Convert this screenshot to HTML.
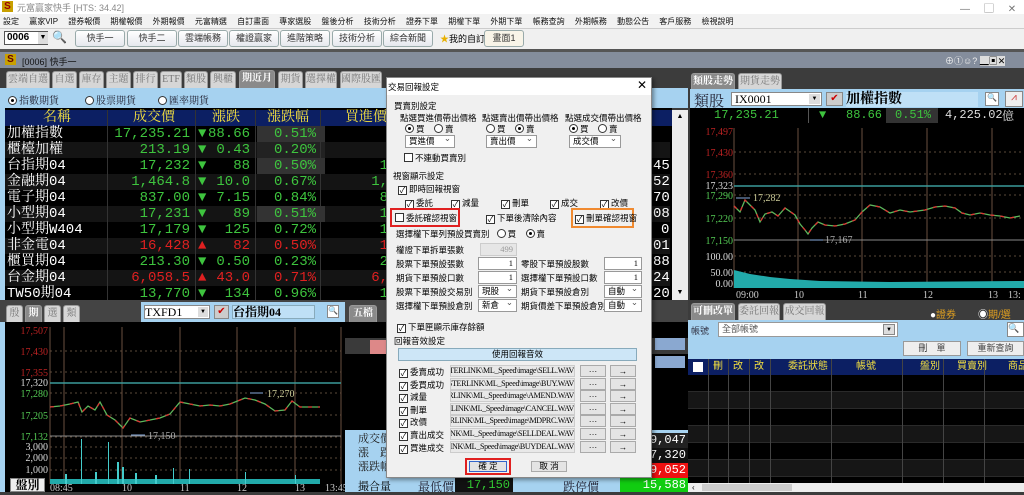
<!DOCTYPE html>
<html><head><meta charset="utf-8"><style>
*{box-sizing:border-box;margin:0;padding:0}
body{width:1024px;height:492px;overflow:hidden;background:#3c3c3c;font-family:"Liberation Sans","Noto Sans CJK TC",sans-serif;font-size:9px;position:relative;color:#000}
.a{position:absolute;white-space:nowrap}
.dlg .a,.dlg .sel,.dlg .inp,.dlg .btn{font-size:8.5px}
.tab{position:absolute;height:17px;background:#d6d6d6;border:1px solid #999;border-bottom:none;border-radius:3px 3px 0 0;color:#777;font-size:10px;line-height:16px;text-align:center;font-family:"Liberation Serif","Noto Serif CJK SC",serif}
.tab.on{background:#8a8a8a;color:#fff;font-weight:bold}
.tb{position:absolute;top:30px;height:17px;border:1px solid #9aa;border-radius:3px;background:linear-gradient(#fff,#e6e8ee);font-size:9px;line-height:15px;text-align:center;color:#333}
.row{position:absolute;left:5px;width:665px;height:16px;font-family:"Liberation Mono","Noto Serif CJK SC",monospace;font-size:14px;line-height:16px}
.row span{position:absolute}
.g{color:#3ec43e}.r{color:#e02020}.w{color:#fff}
.cb{display:inline-block;width:9px;height:9px;border:1px solid #333;background:#fff;vertical-align:-1px;margin-right:2px;font-size:8px;line-height:7px;text-align:center}
.rd{display:inline-block;width:9px;height:9px;border:1px solid #333;border-radius:50%;background:#fff;vertical-align:-1px;margin-right:2px;position:relative}
.rd.on::after{content:"";position:absolute;left:2px;top:2px;width:3px;height:3px;border-radius:50%;background:#000}
.sel{position:absolute;height:13px;border:1px solid #999;background:#fff;font-size:9px;line-height:11px;padding-left:3px}
.sel::after{content:"⌄";position:absolute;right:3px;top:-3px;color:#555}
.inp{position:absolute;height:13px;border:1px solid #999;background:#fff;font-size:9px;line-height:11px;text-align:right;padding-right:3px;font-family:"Liberation Serif",serif}
.btn{position:absolute;height:12px;border:1px solid #aaa;background:#e4e4e4;font-size:9px;line-height:10px;text-align:center}
.path{position:absolute;left:450px;width:125px;height:12px;background:#e8e8e8;border:1px solid #ccc;font-family:"Liberation Serif",serif;font-size:8px;letter-spacing:-0.3px;line-height:10px;overflow:hidden;direction:rtl;text-align:left}
</style></head><body>
<div class="a" style="left:0;top:0;width:1024px;height:14px;background:#fff"></div>
<div class="a" style="left:2px;top:1px;width:11px;height:11px;background:#c8a000;color:#900;font-weight:bold;font-size:10px;line-height:11px;text-align:center">S</div>
<div class="a" style="left:17px;top:1px;color:#888;font-size:9px">元富贏家快手 [HTS: 34.42]</div>
<div class="a" style="left:960px;top:0;color:#777;font-size:10px">—&nbsp;&nbsp;&nbsp;&nbsp;&nbsp;▢&nbsp;&nbsp;&nbsp;&nbsp;&nbsp;✕</div>
<div class="a" style="left:0;top:14px;width:1024px;height:15px;background:#f2f2f2;border-bottom:1px solid #ccc"></div>
<div class="a" style="left:3px;top:16px;font-size:8px;color:#111;word-spacing:8px">設定 贏家VIP 證券報價 期權報價 外期報價 元富精選 自訂畫面 專家選股 盤後分析 技術分析 證券下單 期權下單 外期下單 帳務查詢 外期帳務 動態公告 客戶服務 檢視說明</div>
<div class="a" style="left:0;top:29px;width:1024px;height:20px;background:#f0f0f0"></div>
<div class="a" style="left:4px;top:31px;width:44px;height:14px;border:1px solid #555;background:#fff;font-weight:bold;font-size:10px;line-height:12px;padding-left:2px">0006</div>
<div class="a" style="left:38px;top:32px;width:10px;height:12px;background:#ddd;font-size:7px;text-align:center;line-height:12px">▼</div>
<div class="a" style="left:52px;top:30px;font-size:12px">🔍</div>
<div class="tb" style="left:75px;width:50px">快手一</div>
<div class="tb" style="left:127px;width:50px">快手二</div>
<div class="tb" style="left:178px;width:50px">雲端帳務</div>
<div class="tb" style="left:229px;width:50px">權證贏家</div>
<div class="tb" style="left:280px;width:50px">進階策略</div>
<div class="tb" style="left:332px;width:50px">技術分析</div>
<div class="tb" style="left:383px;width:50px">綜合新聞</div>
<div class="a" style="left:440px;top:32px;font-size:9px"><span style="color:#e8b000">★</span>我的自訂</div>
<div class="tb" style="left:484px;width:40px;background:#f8f4e8">畫面1</div>
<div class="a" style="left:0;top:49px;width:1024px;height:3px;background:#555"></div>
<div class="a" style="left:0;top:52px;width:1024px;height:16px;background:#848d9c"></div>
<div class="a" style="left:5px;top:54px;width:11px;height:11px;background:#c8a000;color:#600;font-weight:bold;font-size:10px;line-height:11px;text-align:center">S</div>
<div class="a" style="left:22px;top:55px;color:#111;font-size:9px">[0006] 快手一</div>
<div class="a" style="left:945px;top:54px;color:#eee;font-size:9px">⊕①☺? <span style="background:#ddd;color:#000">▁▣✕</span></div>
<div class="tab" style="left:6px;top:71px;width:44px">雲端自選</div>
<div class="tab" style="left:52px;top:71px;width:25px">自選</div>
<div class="tab" style="left:79px;top:71px;width:25px">庫存</div>
<div class="tab" style="left:106px;top:71px;width:25px">主題</div>
<div class="tab" style="left:133px;top:71px;width:25px">排行</div>
<div class="tab" style="left:160px;top:71px;width:22px">ETF</div>
<div class="tab" style="left:184px;top:71px;width:24px">類股</div>
<div class="tab" style="left:210px;top:71px;width:26px">興櫃</div>
<div class="tab on" style="left:239px;top:70px;width:36px;height:18px">期近月</div>
<div class="tab" style="left:278px;top:71px;width:25px">期貨</div>
<div class="tab" style="left:305px;top:71px;width:32px">選擇權</div>
<div class="tab" style="left:340px;top:71px;width:42px">國際股匯</div>
<div class="a" style="left:0;top:88px;width:688px;height:20px;background:#a6d2f0"></div>
<div class="a" style="left:8px;top:92px;font-size:10px;color:#223;font-family:'Liberation Serif','Noto Serif CJK SC',serif"><span class="rd on"></span>指數期貨</div>
<div class="a" style="left:85px;top:92px;font-size:10px;color:#223;font-family:'Liberation Serif','Noto Serif CJK SC',serif"><span class="rd"></span>股票期貨</div>
<div class="a" style="left:158px;top:92px;font-size:10px;color:#223;font-family:'Liberation Serif','Noto Serif CJK SC',serif"><span class="rd"></span>匯率期貨</div>
<div class="a" style="left:0;top:108px;width:5px;height:195px;background:#a6d2f0"></div>
<div class="a" style="left:5px;top:108px;width:667px;height:192px;background:#000"></div>
<div class="a" style="left:5px;top:110px;width:667px;height:16px;background:#0c1f63;color:#f4e040;font-size:14px;line-height:16px;font-family:'Liberation Serif','Noto Serif CJK SC',serif">
<span class="a" style="left:38px">名稱</span><span class="a" style="left:128px">成交價</span><span class="a" style="left:207px">漲跌</span><span class="a" style="left:262px">漲跌幅</span><span class="a" style="left:340px">買進價</span></div>
<div class="row" style="top:126px"><span class="w" style="left:2px">加權指數</span><span class="g" style="right:480px">17,235.21</span><span class="g" style="left:193px">▼</span><span class="g" style="right:420px">88.66</span><span style="left:252px;width:68px;height:16px;background:#333"></span><span class="g" style="right:354px">0.51%</span></div>
<div class="row" style="top:142px;background:#141414"><span class="w" style="left:2px">櫃檯加權</span><span class="g" style="right:480px">213.19</span><span class="g" style="left:193px">▼</span><span class="g" style="right:420px">0.43</span><span style="left:252px;width:68px;height:16px;background:#222"></span><span class="g" style="right:354px">0.20%</span></div>
<div class="row" style="top:158px"><span class="w" style="left:2px">台指期04</span><span class="g" style="right:480px">17,232</span><span class="g" style="left:193px">▼</span><span class="g" style="right:420px">88</span><span style="left:252px;width:68px;height:16px;background:#333"></span><span class="g" style="right:354px">0.50%</span><span class="g" style="right:240px">17,232</span><span class="w" style="left:648px">45</span></div>
<div class="row" style="top:174px;background:#141414"><span class="w" style="left:2px">金融期04</span><span class="g" style="right:480px">1,464.8</span><span class="g" style="left:193px">▼</span><span class="g" style="right:420px">10.0</span><span class="g" style="right:354px">0.67%</span><span class="g" style="right:240px">1,464.8</span><span class="w" style="left:648px">52</span></div>
<div class="row" style="top:190px"><span class="w" style="left:2px">電子期04</span><span class="g" style="right:480px">837.00</span><span class="g" style="left:193px">▼</span><span class="g" style="right:420px">7.15</span><span class="g" style="right:354px">0.84%</span><span class="g" style="right:240px">837.00</span><span class="w" style="left:648px">70</span></div>
<div class="row" style="top:206px;background:#141414"><span class="w" style="left:2px">小型期04</span><span class="g" style="right:480px">17,231</span><span class="g" style="left:193px">▼</span><span class="g" style="right:420px">89</span><span style="left:252px;width:68px;height:16px;background:#333"></span><span class="g" style="right:354px">0.51%</span><span class="g" style="right:240px">17,231</span><span class="w" style="left:648px">08</span></div>
<div class="row" style="top:222px"><span class="w" style="left:2px">小型期W404</span><span class="g" style="right:480px">17,179</span><span class="g" style="left:193px">▼</span><span class="g" style="right:420px">125</span><span class="g" style="right:354px">0.72%</span><span class="g" style="right:240px">17,179</span><span class="w" style="left:656px">0</span></div>
<div class="row" style="top:238px;background:#141414"><span class="w" style="left:2px">非金電04</span><span class="r" style="right:480px">16,428</span><span class="r" style="left:193px">▲</span><span class="r" style="right:420px">82</span><span class="r" style="right:354px">0.50%</span><span class="r" style="right:240px">16,428</span><span class="w" style="left:648px">01</span></div>
<div class="row" style="top:254px"><span class="w" style="left:2px">櫃買期04</span><span class="g" style="right:480px">213.30</span><span class="g" style="left:193px">▼</span><span class="g" style="right:420px">0.50</span><span class="g" style="right:354px">0.23%</span><span class="g" style="right:240px">213.30</span><span class="w" style="left:648px">88</span></div>
<div class="row" style="top:270px;background:#141414"><span class="w" style="left:2px">台金期04</span><span class="r" style="right:480px">6,058.5</span><span class="r" style="left:193px">▲</span><span class="r" style="right:420px">43.0</span><span class="r" style="right:354px">0.71%</span><span class="r" style="right:240px">6,060.0</span><span class="w" style="left:648px">24</span></div>
<div class="row" style="top:286px"><span class="w" style="left:2px">TW50期04</span><span class="g" style="right:480px">13,770</span><span class="g" style="left:193px">▼</span><span class="g" style="right:420px">134</span><span class="g" style="right:354px">0.96%</span><span class="g" style="right:240px">13,770</span><span class="w" style="left:648px">20</span></div>
<div class="a" style="left:107px;top:110px;width:1px;height:190px;background:#333"></div>
<div class="a" style="left:195px;top:110px;width:1px;height:190px;background:#333"></div>
<div class="a" style="left:255px;top:110px;width:1px;height:190px;background:#333"></div>
<div class="a" style="left:320px;top:110px;width:1px;height:190px;background:#333"></div>
<div class="a" style="left:672px;top:110px;width:16px;height:190px;background:#eee;font-size:7px;text-align:center;line-height:14px">▲</div>
<div class="a" style="left:672px;top:286px;width:16px;height:14px;background:#eee;font-size:7px;text-align:center;line-height:14px">▼</div>
<div class="a" style="left:0;top:300px;width:688px;height:22px;background:#444"></div>
<div class="tab" style="left:6px;top:305px;width:17px">殷</div>
<div class="tab on" style="left:25px;top:305px;width:17px">期</div>
<div class="tab" style="left:44px;top:305px;width:17px">選</div>
<div class="tab" style="left:63px;top:305px;width:17px">類</div>
<div class="a" style="left:141px;top:302px;width:204px;height:20px;background:#a6d2f0"></div>
<div class="a" style="left:144px;top:305px;width:66px;height:14px;background:#fff;border:1px solid #888;font-size:12px;line-height:12px;font-family:'Liberation Serif',serif">TXFD1<span style="position:absolute;right:1px;top:1px;width:10px;height:10px;background:#ddd;font-size:6px;line-height:10px;text-align:center">▼</span></div>
<div class="a" style="left:214px;top:305px;width:15px;height:14px;background:#ccc;border:1px solid #888;color:#c00;font-size:10px;line-height:12px;text-align:center">✔</div>
<div class="a" style="left:232px;top:305px;width:83px;height:14px;background:#bfe0f6;border:1px solid #8ab;font-size:12px;line-height:12px;font-weight:bold;font-family:'Liberation Serif','Noto Serif CJK SC',serif">台指期04</div>
<div class="a" style="left:327px;top:305px;width:12px;height:13px;background:#fff;border:1px solid #888;font-size:8px;text-align:center">🔍</div>
<div class="tab on" style="left:349px;top:305px;width:28px">五檔</div>
<div class="a" style="left:0;top:322px;width:5px;height:170px;background:#a6d2f0"></div>
<svg class="a" style="left:5px;top:322px" width="340" height="170">
<rect width="340" height="170" fill="#000"/>
<g stroke="#5a4a3a" stroke-dasharray="2,3">
<line x1="45" y1="29" x2="336" y2="29"/><line x1="45" y1="50" x2="336" y2="50"/><line x1="45" y1="71" x2="336" y2="71"/><line x1="45" y1="93" x2="336" y2="93"/><line x1="45" y1="115" x2="336" y2="115"/><line x1="45" y1="125" x2="336" y2="125"/><line x1="45" y1="136" x2="336" y2="136"/><line x1="45" y1="148" x2="336" y2="148"/></g>
<g stroke="#6a5040"><line x1="59" y1="5" x2="59" y2="162"/><line x1="117" y1="5" x2="117" y2="162"/><line x1="175" y1="5" x2="175" y2="162"/><line x1="232" y1="5" x2="232" y2="162"/><line x1="290" y1="5" x2="290" y2="162"/><line x1="336" y1="5" x2="336" y2="162"/><line x1="45" y1="5" x2="45" y2="162"/></g>
<line x1="45" y1="61" x2="336" y2="61" stroke="#3a9a9a" stroke-width="1.5"/>
<line x1="45" y1="114" x2="336" y2="114" stroke="#888"/>
<polyline fill="none" stroke="#5cb85c" stroke-width="1.3" points="45,85 55,84 65,82 73,80 77,90 83,84 90,88 95,80 102,93 110,98 118,106 125,96 135,100 145,98 155,96 165,92 175,80 185,82 195,84 205,83 215,84 225,82 240,76 250,78 260,82 270,89 280,88 287,79 295,85 315,85"/>
<polyline fill="none" stroke="#d33" stroke-width="1.3" stroke-dasharray="4,6" points="45,85 55,84 65,82 73,80 77,90 83,84 90,88 95,80 102,93 110,98 118,106 125,96 135,100 145,98 155,96 165,92 175,80 185,82 195,84 205,83 215,84 225,82 240,76 250,78 260,82 270,89 280,88 287,79 295,85 315,85"/>
<g stroke="#8ad" fill="none"><line x1="126" y1="113" x2="140" y2="113"/><line x1="245" y1="71" x2="258" y2="71"/></g>
<text x="143" y="117" fill="#aaa" font-size="10" font-family="Liberation Serif">17,150</text>
<text x="262" y="75" fill="#cc9" font-size="10" font-family="Liberation Serif">17,270</text>
<g font-family="Liberation Serif" font-size="10" text-anchor="end">
<text x="43" y="12" fill="#b22">17,507</text><text x="43" y="33" fill="#b22">17,430</text><text x="43" y="54" fill="#b22">17,355</text><text x="43" y="64" fill="#ddd">17,320</text><text x="43" y="75" fill="#5c5">17,280</text><text x="43" y="97" fill="#5c5">17,205</text><text x="43" y="118" fill="#5c5">17,132</text><text x="43" y="128" fill="#ddd">3,000</text><text x="43" y="139" fill="#ddd">2,000</text><text x="43" y="151" fill="#ddd">1,000</text></g>
<g font-family="Liberation Serif" font-size="10" fill="#ccc"><text x="45" y="169">08:45</text><text x="117" y="169">10</text><text x="175" y="169">11</text><text x="232" y="169">12</text><text x="290" y="169">13</text><text x="320" y="169">13:45</text></g>
<rect x="45" y="157" width="270" height="5" fill="#2aa"/>
<g fill="#4cc"><rect x="76" y="117" width="1" height="45"/><rect x="103" y="120" width="1" height="42"/><rect x="112" y="140" width="2" height="22"/><rect x="117" y="145" width="2" height="17"/><rect x="168" y="146" width="1" height="16"/><rect x="184" y="147" width="1" height="15"/><rect x="240" y="150" width="1" height="12"/><rect x="60" y="152" width="2" height="10"/><rect x="90" y="150" width="2" height="12"/><rect x="130" y="151" width="2" height="11"/><rect x="150" y="153" width="2" height="9"/><rect x="290" y="153" width="1" height="9"/></g>
</svg>
<div class="a" style="left:10px;top:478px;width:35px;height:14px;background:#eee;border:1px solid #888;font-size:12px;font-weight:bold;text-align:center;line-height:12px;font-family:'Liberation Serif','Noto Serif CJK SC',serif">盤別</div>
<div class="a" style="left:345px;top:322px;width:343px;height:170px;background:#000"></div>
<div class="a" style="left:345px;top:338px;width:343px;height:16px;background:#3a3a3a"></div>
<div class="a" style="left:370px;top:340px;width:20px;height:14px;background:#d88"></div>
<div class="a" style="left:345px;top:430px;width:343px;height:48px;background:#a6d2f0"></div>
<div class="a" style="left:358px;top:432px;font-size:11px;line-height:14px;font-family:'Liberation Serif','Noto Serif CJK SC',serif;color:#222">成交價<br>漲　跌<br>漲跌幅</div>
<div class="a" style="left:345px;top:478px;width:343px;height:14px;background:#a6d2f0"></div>
<div class="a" style="left:358px;top:478px;font-size:11px;font-family:'Liberation Serif','Noto Serif CJK SC',serif">撮合量</div>
<div class="a" style="left:455px;top:478px;width:58px;height:14px;background:#111;color:#3c3;font-size:12px;text-align:right;padding-right:3px;font-family:'Liberation Mono',monospace">17,150</div>
<div class="a" style="left:418px;top:478px;width:37px;font-size:12px;color:#223;font-family:'Liberation Serif','Noto Serif CJK SC',serif">最低價</div>
<div class="a" style="left:563px;top:478px;font-size:12px;color:#223;font-family:'Liberation Serif','Noto Serif CJK SC',serif">跌停價</div>
<div class="a" style="left:620px;top:478px;width:68px;height:14px;background:#1c1;color:#fff;font-size:12px;text-align:right;padding-right:2px;font-family:'Liberation Mono',monospace">15,588</div>
<div class="a" style="left:620px;top:433px;width:68px;height:15px;background:#222;color:#fff;font-size:12px;text-align:right;padding-right:2px;font-family:'Liberation Mono',monospace">99,047</div>
<div class="a" style="left:620px;top:448px;width:68px;height:15px;background:#111;color:#fff;font-size:12px;text-align:right;padding-right:2px;font-family:'Liberation Mono',monospace">17,320</div>
<div class="a" style="left:620px;top:463px;width:68px;height:15px;background:#e11;color:#fff;font-size:12px;text-align:right;padding-right:2px;font-family:'Liberation Mono',monospace">19,052</div>
<div class="a" style="left:655px;top:338px;width:30px;height:12px;background:#8aa8d0"></div>
<div class="a" style="left:655px;top:356px;width:30px;height:12px;background:#8aa8d0"></div>
<div class="a" style="left:688px;top:68px;width:336px;height:232px;background:#3c3c3c"></div>
<div class="tab on" style="left:691px;top:73px;width:44px">類股走勢</div>
<div class="tab" style="left:738px;top:73px;width:44px">期貨走勢</div>
<div class="a" style="left:690px;top:89px;width:334px;height:19px;background:#a6d2f0"></div>
<div class="a" style="left:694px;top:90px;font-size:15px;font-family:'Liberation Serif','Noto Serif CJK SC',serif;color:#223">類股</div>
<div class="a" style="left:731px;top:92px;width:91px;height:14px;background:#fff;border:1px solid #888;font-size:12px;line-height:12px;padding-left:3px;font-family:'Liberation Serif',serif">IX0001<span style="position:absolute;right:1px;top:1px;width:11px;height:10px;background:#ddd;font-size:6px;line-height:10px;text-align:center">▼</span></div>
<div class="a" style="left:826px;top:92px;width:17px;height:14px;background:#ccc;border:1px solid #888;color:#c00;font-size:10px;line-height:12px;text-align:center">✔</div>
<div class="a" style="left:846px;top:92px;width:132px;height:15px;background:#bfe0f6;font-size:14px;font-weight:bold;line-height:15px;font-family:'Liberation Serif','Noto Serif CJK SC',serif">加權指數</div>
<div class="a" style="left:985px;top:92px;width:14px;height:14px;background:#fff;border:1px solid #888;font-size:8px;text-align:center">🔍</div>
<div class="a" style="left:1005px;top:91px;width:18px;height:16px;background:#eee;border:1px solid #888;color:#c33;font-size:10px;text-align:center">⩘</div>
<div class="a" style="left:690px;top:108px;width:334px;height:15px;background:#000;font-family:'Liberation Mono',monospace;font-size:12px;line-height:15px">
<span class="a g" style="left:24px">17,235.21</span><span class="a" style="left:118px;width:1px;height:15px;background:#555"></span><span class="a g" style="left:129px">▼</span><span class="a g" style="left:156px">88.66</span><span class="a" style="left:196px;width:52px;height:15px;background:#333"></span><span class="a g" style="left:205px">0.51%</span><span class="a" style="left:255px;color:#ddd">4,225.02</span><span class="a" style="left:312px;color:#ddd;font-family:'Noto Serif CJK SC',serif">億</span></div>
<svg class="a" style="left:690px;top:123px" width="334" height="177">
<rect width="334" height="177" fill="#000"/>
<g stroke="#5a4a3a" stroke-dasharray="2,3"><line x1="44" y1="29" x2="334" y2="29"/><line x1="44" y1="51" x2="334" y2="51"/><line x1="44" y1="72" x2="334" y2="72"/><line x1="44" y1="95" x2="334" y2="95"/><line x1="44" y1="133" x2="334" y2="133"/><line x1="44" y1="149" x2="334" y2="149"/></g>
<g stroke="#6a5040"><line x1="44" y1="5" x2="44" y2="165"/><line x1="108" y1="5" x2="108" y2="165"/><line x1="172" y1="5" x2="172" y2="165"/><line x1="237" y1="5" x2="237" y2="165"/><line x1="302" y1="5" x2="302" y2="165"/></g>
<line x1="44" y1="63" x2="334" y2="63" stroke="#3a9a9a" stroke-width="1.5"/>
<line x1="44" y1="117" x2="334" y2="117" stroke="#888"/>
<polyline fill="none" stroke="#5cb85c" stroke-width="1.3" points="44,83 50,89 55,77 60,82 65,87 70,99 75,91 82,89 88,93 95,85 105,92 110,101 115,107 118,111 122,105 128,99 135,102 145,103 155,101 165,97 172,89 180,82 190,84 200,90 210,87 220,89 235,87 245,84 255,83 265,85 272,90 280,92 290,90 300,92 310,93 320,95 330,93"/>
<polyline fill="none" stroke="#d33" stroke-width="1.3" stroke-dasharray="4,6" points="44,83 50,89 55,77 60,82 65,87 70,99 75,91 82,89 88,93 95,85 105,92 110,101 115,107 118,111 122,105 128,99 135,102 145,103 155,101 165,97 172,89 180,82 190,84 200,90 210,87 220,89 235,87 245,84 255,83 265,85 272,90 280,92 290,90 300,92 310,93 320,95 330,93"/>
<line x1="46" y1="75" x2="60" y2="75" stroke="#8ad"/><line x1="120" y1="117" x2="133" y2="117" stroke="#8ad"/>
<text x="63" y="78" fill="#cc9" font-size="10" font-family="Liberation Serif">17,282</text>
<text x="135" y="120" fill="#aaa" font-size="10" font-family="Liberation Serif">17,167</text>
<g font-family="Liberation Serif" font-size="10" text-anchor="end"><text x="43" y="12" fill="#b22">17,497</text><text x="43" y="33" fill="#b22">17,430</text><text x="43" y="55" fill="#b22">17,360</text><text x="43" y="66" fill="#ddd">17,323</text><text x="43" y="76" fill="#5c5">17,290</text><text x="43" y="99" fill="#5c5">17,220</text><text x="43" y="121" fill="#5c5">17,150</text><text x="43" y="137" fill="#ddd">100.00</text><text x="43" y="153" fill="#ddd">50.00</text><text x="43" y="164" fill="#ddd">0.00</text></g>
<polygon fill="#2aa" points="44,165 44,147 60,151 80,154 100,156 130,158 200,159 334,158 334,165"/>
<g font-family="Liberation Serif" font-size="10" fill="#ccc"><text x="46" y="175">09:00</text><text x="104" y="175">10</text><text x="168" y="175">11</text><text x="233" y="175">12</text><text x="298" y="175">13</text><text x="318" y="175">13:</text></g>
</svg>
<div class="a" style="left:688px;top:300px;width:336px;height:20px;background:#3c3c3c"></div>
<div class="tab on" style="left:691px;top:303px;width:44px">可刪改單</div>
<div class="tab" style="left:738px;top:303px;width:42px">委託回報</div>
<div class="tab" style="left:783px;top:303px;width:43px">成交回報</div>
<div class="a" style="left:930px;top:306px;color:#e0a020;font-size:10px"><span style="color:#fff">●</span>證券</div>
<div class="a" style="left:978px;top:306px;color:#e0a020;font-size:10px"><span style="color:#fff">◉</span>期/選</div>
<div class="a" style="left:688px;top:320px;width:336px;height:39px;background:#a6d2f0"></div>
<div class="a" style="left:691px;top:324px;font-size:9px;color:#334">帳號</div>
<div class="a" style="left:718px;top:322px;width:180px;height:15px;background:#fff;border:1px solid #999;font-size:9px;color:#555;line-height:13px;padding-left:3px">全部帳號<span style="position:absolute;right:2px;top:1px;width:12px;height:11px;background:#ddd;border:1px solid #888;font-size:6px;line-height:10px;text-align:center;color:#000">▼</span></div>
<div class="a" style="left:1007px;top:322px;width:17px;height:15px;background:#fff;border:1px solid #888;font-size:9px">🔍</div>
<div class="a" style="left:903px;top:341px;width:58px;height:15px;background:#eee;border:1px solid #999;font-size:9px;text-align:center;line-height:13px;color:#444">刪　單</div>
<div class="a" style="left:967px;top:341px;width:57px;height:15px;background:#eee;border:1px solid #999;font-size:9px;text-align:center;line-height:13px;color:#444">重新查詢</div>
<div class="a" style="left:688px;top:359px;width:336px;height:16px;background:#0c1f63;color:#f4e040;font-size:10px;line-height:16px">
<span class="a" style="left:5px;top:3px;width:10px;height:10px;background:#fff"></span><span class="a" style="left:25px">刪</span><span class="a" style="left:45px">改</span><span class="a" style="left:66px">改</span><span class="a" style="left:100px">委託狀態</span><span class="a" style="left:168px">帳號</span><span class="a" style="left:232px">盤別</span><span class="a" style="left:269px">買賣別</span><span class="a" style="left:320px">商品</span></div>
<div class="a" style="left:688px;top:375px;width:336px;height:108px;background:repeating-linear-gradient(#000 0 16px,#2a2a2a 16px 17px,#161616 17px 33px,#2a2a2a 33px 34px)"></div>
<div class="a" style="left:708px;top:359px;width:1px;height:124px;background:#444"></div>
<div class="a" style="left:728px;top:359px;width:1px;height:124px;background:#444"></div>
<div class="a" style="left:749px;top:359px;width:1px;height:124px;background:#444"></div>
<div class="a" style="left:770px;top:359px;width:1px;height:124px;background:#444"></div>
<div class="a" style="left:831px;top:359px;width:1px;height:124px;background:#444"></div>
<div class="a" style="left:902px;top:359px;width:1px;height:124px;background:#444"></div>
<div class="a" style="left:943px;top:359px;width:1px;height:124px;background:#444"></div>
<div class="a" style="left:984px;top:359px;width:1px;height:124px;background:#444"></div>
<div class="a" style="left:688px;top:483px;width:336px;height:9px;background:#eee;font-size:8px;line-height:9px;padding-left:4px">‹<span style="position:absolute;left:14px;top:1px;width:90px;height:7px;background:#ccc"></span></div>
<!-- dialog -->
<div class="dlg">
<div class="a" style="left:386px;top:77px;width:266px;height:401px;background:#f0f0f0;border:1px solid #888;box-shadow:2px 2px 4px rgba(0,0,0,.4)"></div>
<div class="a" style="left:387px;top:78px;width:264px;height:17px;background:#fff"></div>
<div class="a" style="left:388px;top:81px">交易回報設定</div>
<div class="a" style="left:637px;top:78px;font-size:12px">✕</div>
<div class="a" style="left:394px;top:100px">買賣別設定</div>
<div class="a" style="left:400px;top:112px">點選買進價帶出價格</div>
<div class="a" style="left:482px;top:112px">點選賣出價帶出價格</div>
<div class="a" style="left:565px;top:112px">點選成交價帶出價格</div>
<div class="a" style="left:405px;top:123px"><span class="rd on"></span>買&nbsp;&nbsp;&nbsp;&nbsp;<span class="rd"></span>賣</div>
<div class="a" style="left:486px;top:123px"><span class="rd"></span>買&nbsp;&nbsp;&nbsp;&nbsp;<span class="rd on"></span>賣</div>
<div class="a" style="left:569px;top:123px"><span class="rd on"></span>買&nbsp;&nbsp;&nbsp;&nbsp;<span class="rd"></span>賣</div>
<div class="sel" style="left:405px;top:135px;width:50px">買進價</div>
<div class="sel" style="left:486px;top:135px;width:51px">賣出價</div>
<div class="sel" style="left:569px;top:135px;width:52px">成交價</div>
<div class="a" style="left:404px;top:152px"><span class="cb"></span>不連動買賣別</div>
<div class="a" style="left:393px;top:170px">視窗顯示設定</div>
<div class="a" style="left:398px;top:183px"><span class="cb">✓</span>即時回報視窗</div>
<div class="a" style="left:405px;top:197px"><span class="cb">✓</span>委託</div>
<div class="a" style="left:451px;top:197px"><span class="cb">✓</span>減量</div>
<div class="a" style="left:501px;top:197px"><span class="cb">✓</span>刪單</div>
<div class="a" style="left:550px;top:197px"><span class="cb">✓</span>成交</div>
<div class="a" style="left:600px;top:197px"><span class="cb">✓</span>改價</div>
<div class="a" style="left:390px;top:208px;width:70px;height:19px;border:2px solid #e02020"></div>
<div class="a" style="left:395px;top:212px"><span class="cb"></span>委託確認視窗</div>
<div class="a" style="left:486px;top:212px"><span class="cb">✓</span>下單後清除內容</div>
<div class="a" style="left:571px;top:208px;width:63px;height:20px;border:2px solid #f08a30"></div>
<div class="a" style="left:575px;top:212px"><span class="cb">✓</span>刪單確認視窗</div>
<div class="a" style="left:396px;top:228px">選擇權下單列預設買賣別&nbsp;&nbsp;&nbsp;<span class="rd"></span>買&nbsp;&nbsp;&nbsp;&nbsp;<span class="rd on"></span>賣</div>
<div class="a" style="left:396px;top:244px">權證下單拆單張數</div>
<div class="inp" style="left:480px;top:243px;width:37px;background:#e6e6e6;color:#999;border-color:#ccc">499</div>
<div class="a" style="left:396px;top:258px">股票下單預設張數</div><div class="inp" style="left:478px;top:257px;width:39px">1</div>
<div class="a" style="left:521px;top:258px">零股下單預設股數</div><div class="inp" style="left:604px;top:257px;width:38px">1</div>
<div class="a" style="left:396px;top:272px">期貨下單預設口數</div><div class="inp" style="left:478px;top:271px;width:39px">1</div>
<div class="a" style="left:521px;top:272px">選擇權下單預設口數</div><div class="inp" style="left:604px;top:271px;width:38px">1</div>
<div class="a" style="left:396px;top:286px">股票下單預設交易別</div><div class="sel" style="left:478px;top:285px;width:39px">現股</div>
<div class="a" style="left:521px;top:286px">期貨下單預設倉別</div><div class="sel" style="left:604px;top:285px;width:38px">自動</div>
<div class="a" style="left:396px;top:300px">選擇權下單預設倉別</div><div class="sel" style="left:478px;top:299px;width:39px">新倉</div>
<div class="a" style="left:521px;top:300px">期貨價差下單預設倉別</div><div class="sel" style="left:604px;top:299px;width:38px">自動</div>
<div class="a" style="left:397px;top:321px"><span class="cb">✓</span>下單匣顯示庫存餘額</div>
<div class="a" style="left:394px;top:335px">回報音效設定</div>
<div class="a" style="left:398px;top:348px;width:239px;height:13px;background:#cde6f7;border:1px solid #8ab;text-align:center;line-height:11px">使用回報音效</div>
<div class="a" style="left:399px;top:366px"><span class="cb">✓</span>委賣成功</div><div class="path" style="top:365px">C:\MASTERLINK\ML_Speed\image\SELL.WAV</div><div class="btn" style="left:580px;top:365px;width:26px">···</div><div class="btn" style="left:610px;top:365px;width:26px">→</div>
<div class="a" style="left:399px;top:379px"><span class="cb">✓</span>委買成功</div><div class="path" style="top:378px">C:\MASTERLINK\ML_Speed\image\BUY.WAV</div><div class="btn" style="left:580px;top:378px;width:26px">···</div><div class="btn" style="left:610px;top:378px;width:26px">→</div>
<div class="a" style="left:399px;top:391px"><span class="cb">✓</span>減量</div><div class="path" style="top:390px">C:\MASTERLINK\ML_Speed\image\AMEND.WAV</div><div class="btn" style="left:580px;top:390px;width:26px">···</div><div class="btn" style="left:610px;top:390px;width:26px">→</div>
<div class="a" style="left:399px;top:404px"><span class="cb">✓</span>刪單</div><div class="path" style="top:403px">C:\MASTERLINK\ML_Speed\image\CANCEL.WAV</div><div class="btn" style="left:580px;top:403px;width:26px">···</div><div class="btn" style="left:610px;top:403px;width:26px">→</div>
<div class="a" style="left:399px;top:416px"><span class="cb">✓</span>改價</div><div class="path" style="top:415px">C:\MASTERLINK\ML_Speed\image\MDPRC.WAV</div><div class="btn" style="left:580px;top:415px;width:26px">···</div><div class="btn" style="left:610px;top:415px;width:26px">→</div>
<div class="a" style="left:399px;top:429px"><span class="cb">✓</span>賣出成交</div><div class="path" style="top:428px">C:\MASTERLINK\ML_Speed\image\SELLDEAL.WAV</div><div class="btn" style="left:580px;top:428px;width:26px">···</div><div class="btn" style="left:610px;top:428px;width:26px">→</div>
<div class="a" style="left:399px;top:442px"><span class="cb">✓</span>買進成交</div><div class="path" style="top:441px">C:\MASTERLINK\ML_Speed\image\BUYDEAL.WAV</div><div class="btn" style="left:580px;top:441px;width:26px">···</div><div class="btn" style="left:610px;top:441px;width:26px">→</div>
<div class="a" style="left:465px;top:458px;width:46px;height:17px;border:2px solid #e02020"></div>
<div class="a" style="left:469px;top:461px;width:38px;height:11px;background:#e4e4e4;border:1px solid #36c;text-align:center;line-height:9px">確 定</div>
<div class="a" style="left:531px;top:461px;width:36px;height:11px;background:#e4e4e4;border:1px solid #aaa;text-align:center;line-height:9px">取 消</div>
</div>
</body></html>
